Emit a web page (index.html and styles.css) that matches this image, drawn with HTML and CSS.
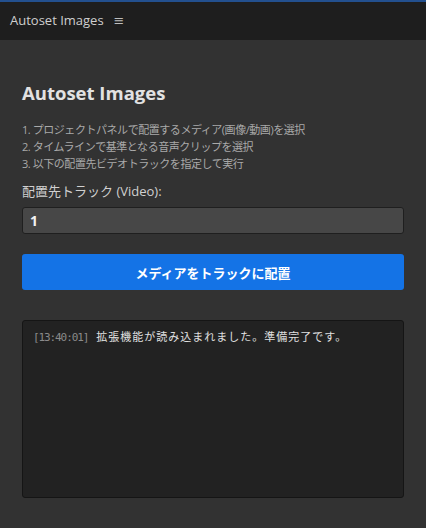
FILE: index.html
```html
<!DOCTYPE html>
<html lang="ja">
<head>
<meta charset="utf-8">
<title>Autoset Images</title>
<link rel="stylesheet" href="styles.css">
</head>
<body>
  <header class="tab-bar">
    <span class="tab-title">Autoset Images</span>
    <span class="tab-menu">≡</span>
  </header>
  <main class="panel">
    <h1 class="panel-title">Autoset Images</h1>
    <ol class="steps">
      <li>1. プロジェクトパネルで配置するメディア(画像/動画)を選択</li>
      <li>2. タイムラインで基準となる音声クリップを選択</li>
      <li>3. 以下の配置先ビデオトラックを指定して実行</li>
    </ol>
    <label class="field-label" for="track">配置先トラック (Video):</label>
    <input class="field-input" id="track" type="text" value="1">
    <button class="run-button" type="button">メディアをトラックに配置</button>
    <div class="log">
      <div class="log-line"><span class="log-time">[13:40:01]</span><span class="log-msg">拡張機能が読み込まれました。準備完了です。</span></div>
    </div>
  </main>
</body>
</html>
```

FILE: styles.css
```css
* {
  box-sizing: border-box;
}

html, body {
  margin: 0;
  height: 100%;
}

body {
  background: #323232;
  font-family: "Open Sans", "Noto Sans CJK JP", sans-serif;
  color: #cccccc;
  display: flex;
  flex-direction: column;
}

.tab-bar {
  height: 40px;
  background: #1e1e1e;
  border-top: 2px solid #23508f;
  display: flex;
  align-items: center;
  gap: 10px;
  padding: 0 10px 2px;
  flex-shrink: 0;
}

.tab-title {
  font-size: 13px;
  color: #cfcfcf;
}

.tab-menu {
  font-family: "DejaVu Sans", sans-serif;
  font-size: 13px;
  color: #bdbdbd;
}

.panel {
  padding: 40px 22px 30px;
  display: flex;
  flex-direction: column;
}

.panel-title {
  margin: 0;
  font-size: 18.5px;
  font-weight: 700;
  color: #e2e2e2;
  line-height: 26px;
}

.steps {
  list-style: none;
  margin: 15px 0 0;
  padding: 0;
  font-size: 11px;
  letter-spacing: -0.45px;
  line-height: 17px;
  color: #a9a9a9;
}

.field-label {
  margin-top: 9px;
  font-size: 13px;
  line-height: 20px;
  color: #d0d0d0;
}

.field-input {
  margin-top: 6px;
  height: 27px;
  background: #474747;
  border: 1px solid #1f1f1f;
  border-radius: 3px;
  padding: 0 7px;
  font-family: "Open Sans", sans-serif;
  font-size: 14px;
  font-weight: 700;
  color: #f2f2f2;
  outline: none;
}

.run-button {
  margin-top: 20px;
  height: 36px;
  background: #1473e6;
  border: none;
  border-radius: 3px;
  font-family: "Open Sans", "Noto Sans CJK JP", sans-serif;
  font-size: 13px;
  font-weight: 700;
  color: #ffffff;
}

.log {
  margin-top: 30px;
  height: 178px;
  background: #222222;
  border: 1px solid #151515;
  border-radius: 3px;
  padding: 7px 10px;
}

.log-line {
  font-size: 11px;
  line-height: 16px;
  white-space: nowrap;
}

.log-time {
  font-family: "DejaVu Sans Mono", monospace;
  letter-spacing: -1.1px;
  color: #8a8a8a;
}

.log-msg {
  margin-left: 8px;
  font-family: "Noto Sans CJK JP", sans-serif;
  letter-spacing: 1px;
  color: #e0e0e0;
}
```
